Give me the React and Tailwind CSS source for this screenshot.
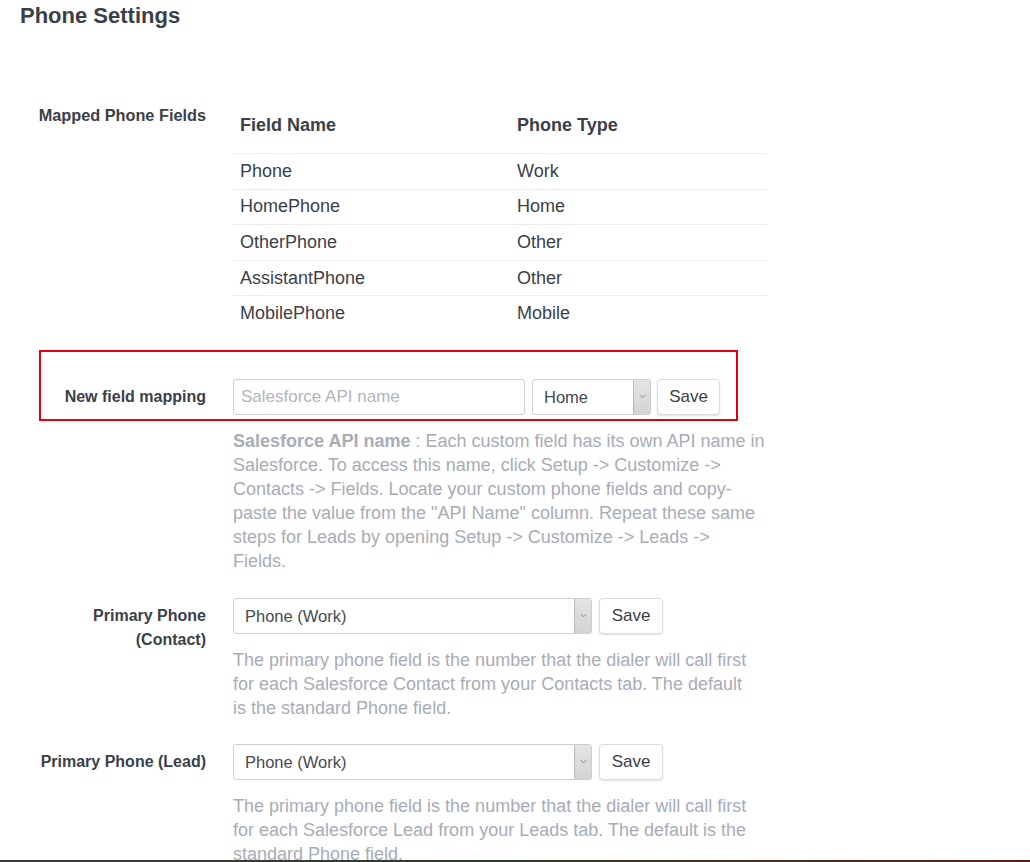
import React from "react";

const font = { fontFamily: '"Liberation Sans", Arial, sans-serif' };

function Chevron() {
  return (
    <div className="flex h-full w-[17px] items-center justify-center border-l border-[#b9b9b9] bg-gradient-to-b from-[#e4e4e4] to-[#d4d4d4]">
      <svg width="7" height="5" viewBox="0 0 7 5" fill="none">
        <path d="M0.8 1 L3.5 3.8 L6.2 1" stroke="#8a8a8a" strokeWidth="1" />
      </svg>
    </div>
  );
}

function Select({ value, width }) {
  return (
    <div className={`flex h-[36px] ${width} items-stretch rounded-[3px] border border-[#cfcfcf] bg-white`}>
      <div className="flex flex-1 items-center pl-[11px] text-[16.5px] text-[#454a55]">{value}</div>
      <Chevron />
    </div>
  );
}

function SaveBtn({ width }) {
  return (
    <button className={`flex h-[36px] ${width} items-center justify-center rounded-[4px] border border-[#dcdcdc] bg-white text-[17px] text-[#3a3e47] shadow-[0_1px_2px_rgba(0,0,0,0.12)]`}>
      Save
    </button>
  );
}

function Help({ lines }) {
  return (
    <div className="mt-[14px] text-[18px] leading-[24px] text-[#a8acb7]">
      {lines.map((l, i) => (
        <div key={i} className="whitespace-nowrap">{l}</div>
      ))}
    </div>
  );
}

const rows = [
  ["Phone", "Work"],
  ["HomePhone", "Home"],
  ["OtherPhone", "Other"],
  ["AssistantPhone", "Other"],
  ["MobilePhone", "Mobile"],
];

export default function App() {
  return (
    <div className="relative h-[862px] w-[1030px] overflow-hidden bg-white" style={font}>
      <div className="pl-[20px]">
        <h1 className="pt-[2px] text-[22px] font-bold leading-[28px] text-[#3b3f49]">Phone Settings</h1>
      </div>

      {/* Mapped phone fields */}
      <div className="mt-[70px] grid grid-cols-[206px_534px] gap-x-[27px]">
        <div className="pt-[5px] text-right text-[16.3px] font-bold leading-[20px] text-[#3b3f49]">Mapped Phone Fields</div>
        <div>
          <div className="flex h-[53px] items-start pt-[15px] text-[18px] font-bold leading-[20px] text-[#3b3f49]">
            <div className="w-[284px] pl-[7px]">Field Name</div>
            <div>Phone Type</div>
          </div>
          {rows.map(([a, b], i) => (
            <div key={i} className="flex h-[35.6px] items-center border-t border-[#ededed] text-[18px] text-[#3b3f49]">
              <div className="w-[284px] pl-[7px]">{a}</div>
              <div>{b}</div>
            </div>
          ))}
        </div>
      </div>

      {/* New field mapping */}
      <div className="relative mt-[48px] grid grid-cols-[206px_1fr] gap-x-[27px]">
        <div className="pointer-events-none absolute left-[39px] top-[-29px] h-[71px] w-[699px] border-2 border-[#e3000f]" />
        <div className="flex h-[36px] items-center justify-end text-[16px] font-bold text-[#3b3f49]">New field mapping</div>
        <div>
          <div className="flex items-center">
            <input
              placeholder="Salesforce API name"
              className="h-[36px] w-[292px] rounded-[3px] border border-[#cfcfcf] bg-white pl-[7px] text-[17px] text-[#454a55] outline-none placeholder:text-[#b2b5bd]"
            />
            <div className="ml-[7px]">
              <Select value="Home" width="w-[119px]" />
            </div>
            <div className="ml-[6px]">
              <SaveBtn width="w-[63px]" />
            </div>
          </div>
          <Help
            lines={[
              <span key="a"><span className="font-bold">Salesforce API name</span> : Each custom field has its own API name in</span>,
              "Salesforce. To access this name, click Setup -> Customize ->",
              "Contacts -> Fields. Locate your custom phone fields and copy-",
              'paste the value from the "API Name" column. Repeat these same',
              "steps for Leads by opening Setup -> Customize -> Leads ->",
              "Fields.",
            ]}
          />
        </div>
      </div>

      {/* Primary Phone (Contact) */}
      <div className="mt-[25px] grid grid-cols-[206px_1fr] gap-x-[27px]">
        <div className="pt-[6px] text-right text-[16px] font-bold leading-[24px] text-[#3b3f49]">
          Primary Phone
          <br />
          (Contact)
        </div>
        <div>
          <div className="flex items-center">
            <Select value="Phone (Work)" width="w-[359px]" />
            <div className="ml-[7px]">
              <SaveBtn width="w-[64px]" />
            </div>
          </div>
          <Help
            lines={[
              "The primary phone field is the number that the dialer will call first",
              "for each Salesforce Contact from your Contacts tab. The default",
              "is the standard Phone field.",
            ]}
          />
        </div>
      </div>

      {/* Primary Phone (Lead) */}
      <div className="mt-[24px] grid grid-cols-[206px_1fr] gap-x-[27px]">
        <div className="flex h-[36px] items-center justify-end text-[16px] font-bold text-[#3b3f49]">Primary Phone (Lead)</div>
        <div>
          <div className="flex items-center">
            <Select value="Phone (Work)" width="w-[359px]" />
            <div className="ml-[7px]">
              <SaveBtn width="w-[64px]" />
            </div>
          </div>
          <Help
            lines={[
              "The primary phone field is the number that the dialer will call first",
              "for each Salesforce Lead from your Leads tab. The default is the",
              "standard Phone field.",
            ]}
          />
        </div>
      </div>

      <div className="absolute bottom-0 left-0 h-[2px] w-full bg-gradient-to-r from-[#3a3a3a] via-[#2f3a2a] to-[#5a1a1a]" />
    </div>
  );
}
